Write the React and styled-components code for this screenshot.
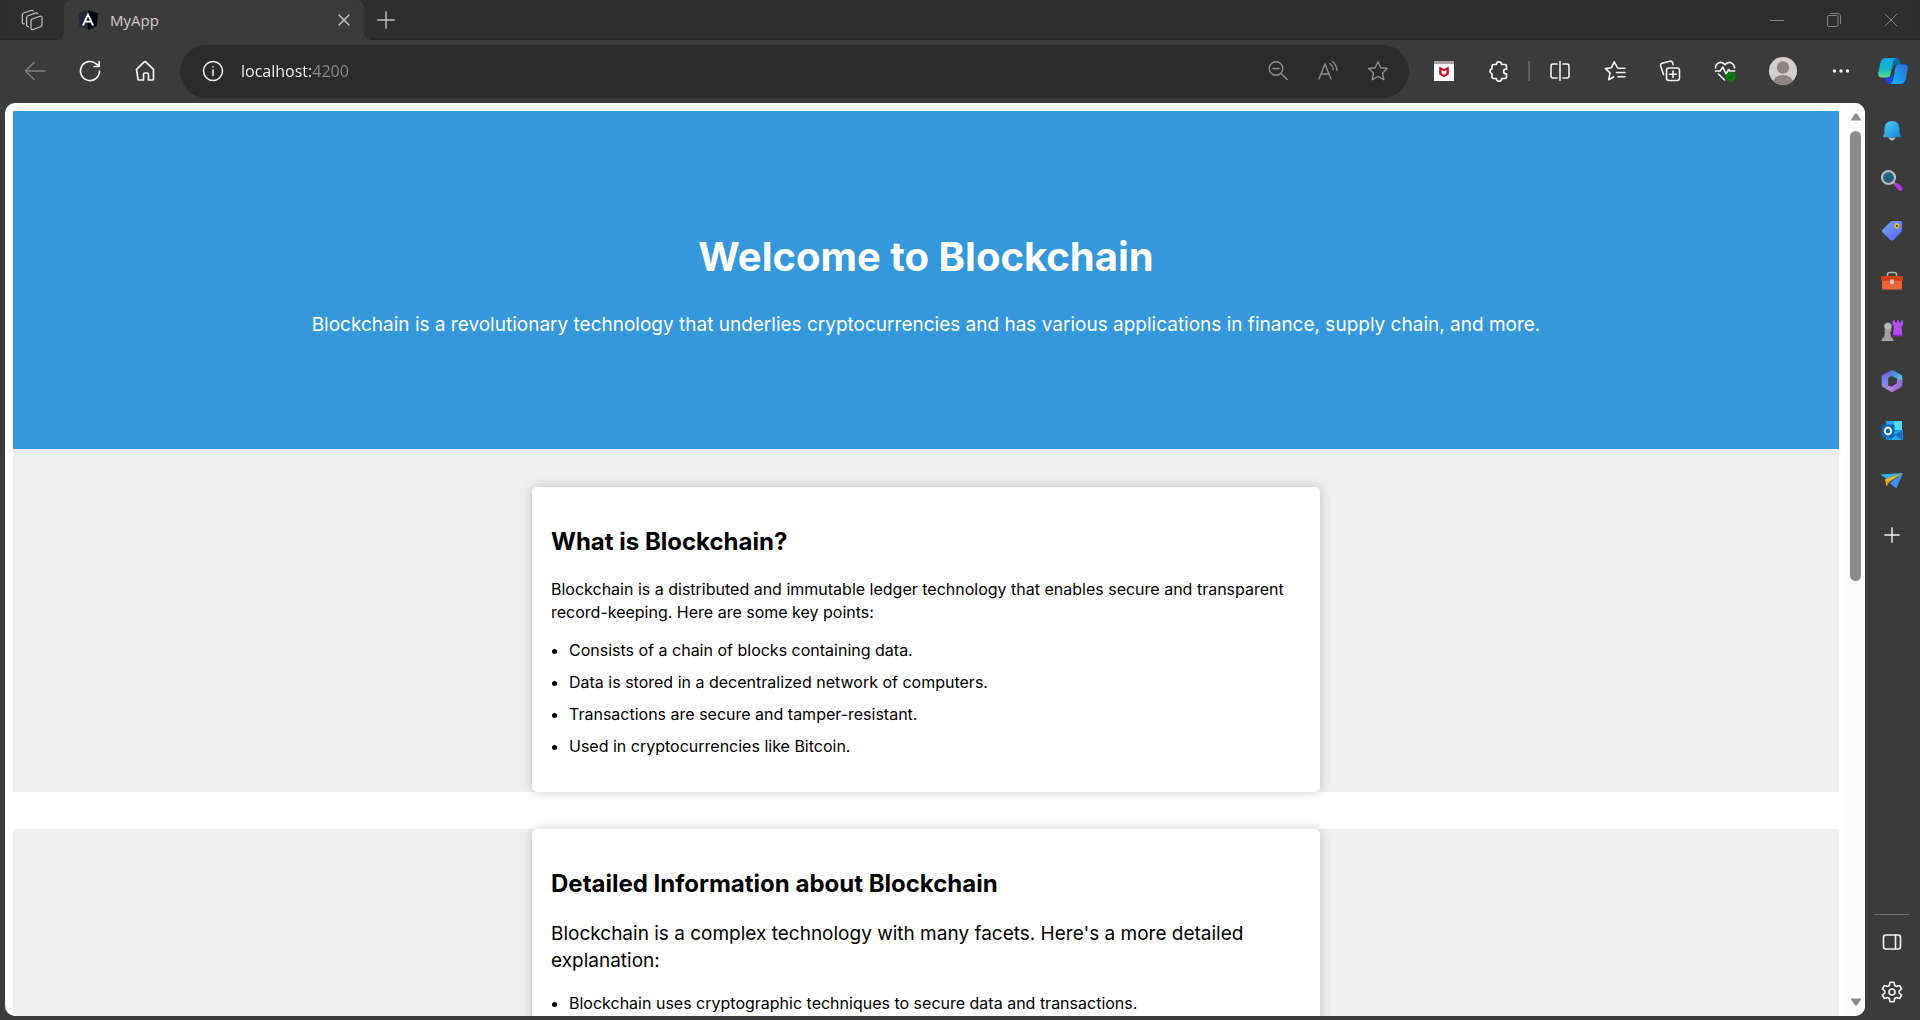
import React from "react";
import styled, { createGlobalStyle } from "styled-components";

const GlobalStyle = createGlobalStyle`
  *, *::before, *::after { box-sizing: border-box; }
  body { margin: 0; background: #3b3b3b; }
  button { font: inherit; color: inherit; background: none; border: 0; padding: 0; margin: 0; cursor: pointer; }
`;

const chromeFont = `"Open Sans", "Noto Sans", sans-serif`;
const pageFont = `Inter, "Open Sans", sans-serif`;

const Browser = styled.div`
  display: flex;
  flex-direction: column;
  height: 100vh;
  overflow: hidden;
  background: #3b3b3b;
  color: #f2f2f2;
  font-family: ${chromeFont};
`;

const TabStrip = styled.header`
  display: flex;
  flex: none;
  height: 40px;
  background: #2e2e2e;
  box-shadow: inset 0 -1px 1px #262626;
`;

const StripButton = styled.button`
  display: flex;
  align-items: center;
  justify-content: center;
  width: ${(p) => p.$width}px;
  color: ${(p) => p.$tone || "#c4c4c4"};
`;

const Tab = styled.div`
  position: relative;
  display: flex;
  align-items: center;
  gap: 12px;
  width: 300px;
  padding: 0 14px;
  border-radius: 8px 8px 0 0;
  background: #3b3b3b;

  &::before, &::after {
    content: "";
    position: absolute;
    bottom: 0;
    width: 6px;
    height: 6px;
  }
  &::before { right: 100%; background: radial-gradient(circle at 0 0, #2e2e2e 5px, #3b3b3b 6px); }
  &::after { left: 100%; background: radial-gradient(circle at 100% 0, #2e2e2e 5px, #3b3b3b 6px); }
`;

const TabTitle = styled.span`
  flex: 1;
  font-size: 15px;
  line-height: 20px;
  color: #cfcfcf;
`;

const WindowControls = styled.div`
  display: flex;
  margin-left: auto;
  padding-right: 1px;
`;

const Toolbar = styled.nav`
  display: flex;
  flex: none;
  align-items: center;
  height: 63px;
  padding: 0 2px 1px 7px;
`;

const ToolButton = styled.button`
  display: flex;
  align-items: center;
  justify-content: center;
  flex: none;
  width: ${(p) => p.$width || 55}px;
  height: 40px;
  color: ${(p) => p.$tone || "#f2f2f2"};
`;

const AddressBar = styled.form`
  display: flex;
  flex: 1;
  align-items: center;
  height: 53px;
  margin: 0 7px 0 8px;
  padding: 0 6px 0 5px;
  border-radius: 27px;
  background: #2b2b2b;
`;

const AddressInput = styled.input`
  flex: 1;
  min-width: 0;
  height: 30px;
  padding: 0 1px;
  border: 0;
  outline: 0;
  font-family: ${chromeFont};
  font-size: 16px;
  line-height: 30px;
  color: transparent;
  background: linear-gradient(90deg, #ffffff 71px, #8c8c8c 71px);
  background-clip: text;
  -webkit-background-clip: text;
`;

const Divider = styled.span`
  flex: none;
  width: 2px;
  height: 20px;
  margin: 0 2px;
  background: #5e5e5e;
`;

const AccountGroup = styled.div`
  display: flex;
  gap: 3px;
  margin-left: 3px;
`;

const Body = styled.div`
  display: flex;
  flex: 1;
  min-height: 0;
`;

const Frame = styled.div`
  display: flex;
  flex: 1;
  min-width: 0;
  margin: 0 0 4px 5px;
  border-radius: 10px;
  overflow: hidden;
  background: #ffffff;
`;

const Viewport = styled.main`
  flex: 1;
  min-width: 0;
  padding: 8px 7px 0 8px;
  overflow-y: auto;
  scrollbar-width: none;
  color: #000000;
  font-family: ${pageFont};
`;

const ScrollTrack = styled.div`
  display: flex;
  flex-direction: column;
  align-items: center;
  flex: none;
  width: 19px;
  background: #fcfcfc;
`;

const ScrollArrow = styled.button`
  display: flex;
  align-items: center;
  justify-content: center;
  width: 100%;
  height: 28px;
`;

const ScrollRail = styled.div`
  flex: 1;
`;

const ScrollThumb = styled.div`
  width: 11px;
  height: calc(100% * 21 / 40);
  border-radius: 6px;
  background: #8b8b8b;
`;

const Hero = styled.section`
  padding: 117px 20px 109px;
  background: #3498db;
  color: #ffffff;
  text-align: center;
`;

const HeroTitle = styled.h1`
  margin: 0 0 24px;
  font-size: 40px;
  line-height: 58px;
  font-weight: 700;
`;

const HeroText = styled.p`
  margin: 0;
  font-size: 19px;
  line-height: 30px;
`;

const Section = styled.section`
  padding-top: ${(p) => (p.$first ? 38 : 0)}px;
  margin-bottom: 37px;
  background: #efefef;
`;

const Card = styled.article`
  max-width: 788px;
  margin: 0 auto;
  padding: 37px 19px 19px;
  border-radius: 5px;
  background: #ffffff;
  box-shadow: 0 0 12px rgba(0, 0, 0, 0.2);
`;

const CardTitle = styled.h2`
  margin: 0 0 18px;
  font-size: 24px;
  line-height: 36px;
  font-weight: 700;
`;

const CardText = styled.p`
  margin: 0 0 ${(p) => (p.$large ? 18 : 15)}px;
  font-size: ${(p) => (p.$large ? 19 : 16)}px;
  line-height: ${(p) => (p.$large ? 27 : 23)}px;
`;

const PointList = styled.ul`
  display: flex;
  flex-direction: column;
  gap: 9px;
  margin: 0 0 15px;
  padding-left: 18px;
  font-size: 16px;
  line-height: 23px;
`;

const Sidebar = styled.aside`
  display: flex;
  flex-direction: column;
  align-items: center;
  flex: none;
  width: 55px;
  padding: 3px 2px 3px 0;
`;

const SideButton = styled.button`
  display: flex;
  align-items: center;
  justify-content: center;
  flex: none;
  width: 50px;
  height: ${(p) => p.$height || 50}px;
  color: #f2f2f2;
`;

const SideRule = styled.hr`
  width: 35px;
  height: 1px;
  margin: auto 0 2px;
  border: 0;
  background: #747474;
`;

function Line({ w = 22, h = w, sw = 1.4, children }) {
  return (
    <svg width={w} height={h} viewBox={`0 0 ${w} ${h}`} fill="none" stroke="currentColor"
      strokeWidth={sw} strokeLinecap="round" strokeLinejoin="round" aria-hidden="true">
      {children}
    </svg>
  );
}

function Art({ w = 24, h = w, children }) {
  return <svg width={w} height={h} viewBox={`0 0 ${w} ${h}`} aria-hidden="true">{children}</svg>;
}

const WorkspacesIcon = () => (
  <Line sw={1.2}>
    <path d="M10.7 10.2 18.8 7.3q2.2-.6 2.2 1.4v6.8q0 1.6-1.5 2.2l-7.3 2.8q-2.2.6-2.2-1.5v-7.2q0-1.1.7-1.6Z" />
    <path d="M7.6 17.6q-2 .3-2-1.6V8.7q0-1.5 1.4-2l7.4-2.6q1.6-.5 2.2.5" />
    <path d="M3.3 14.8q-2 .3-2-1.6V6q0-1.5 1.4-2l7.2-2.5q1.7-.5 2.3.5" />
  </Line>
);
const AngularIcon = () => (
  <Art w={20}>
    <path d="M10 0 20 3.4 18.5 16 10 20 1.5 16 0 3.4Z" fill="#23283a" />
    <path d="M10 0 20 3.4 18.5 16 10 20Z" fill="#02040f" />
    <path d="M10 2.5 3.8 15.5h2.4l1.2-3h5.2l1.2 3h2.4ZM10 6.5l1.8 4.2H8.2Z" fill="#fff" fillRule="evenodd" />
  </Art>
);
const CloseIcon = ({ size = 12, sw = 1.5 }) => (
  <Line w={size} sw={sw}><path d={`M1 1 ${size - 1} ${size - 1}M${size - 1} 1 1 ${size - 1}`} /></Line>
);
const PlusIcon = ({ size = 18 }) => (
  <Line w={size}><path d={`M${size / 2} .8V${size - 0.8}M.8 ${size / 2}H${size - 0.8}`} /></Line>
);
const BackIcon = () => <Line><path d="M21 11H1.5M10 2.5 1.5 11l8.5 8.5" /></Line>;
const ReloadIcon = () => (
  <Line sw={1.7}><path d="M20.500 11a9.500 9.500 0 1 1-3.200-7.100L20 6.300M20.200 1.500v5h-5" /></Line>
);
const HomeIcon = () => (
  <Line sw={1.7}>
    <path d="M2.500 9.300 10 2.200q1-.9 2 0l7.500 7.100V19q0 1-1 1h-4v-5.500q0-1.500-1.500-1.500h-2q-1.500 0-1.500 1.500V20h-4.500q-1 0-1-1Z" />
  </Line>
);
const InfoIcon = () => (
  <Line sw={1.5}><circle cx="11" cy="11" r="9.5" /><path d="M11 10v5.5M11 6.700v.2" /></Line>
);
const ZoomOutIcon = () => (
  <Line><circle cx="9" cy="8.5" r="6.8" /><path d="M14 13.500l6.200 6M6 8.500h6" /></Line>
);
const ReadIcon = () => (
  <Line>
    <path d="M2 19 8 4l6 15M4.200 14h7.600M13 3.500q3 2.500 3.200 6M15.500 1.500q4 3.500 4.500 9" />
  </Line>
);
const StarIcon = () => (
  <Line>
    <path d="m11 1.700 2.800 6 6.600.8-4.900 4.500 1.300 6.700L11 16.500l-5.800 3.200 1.300-6.700L1.600 8.500l6.600-.8Z" />
  </Line>
);
const ShieldIcon = () => (
  <Art w={20}>
    <rect width="20" height="20" fill="#fff" />
    <rect width="20" height="3" fill="#a79fa3" />
    <path d="M5.200 5.500 10 8l4.800-2.500v8L10 16.200l-4.800-2.700ZM7.600 9v3.300L10 13.700l2.400-1.400V9L10 10.300Z" fill="#c8131d" fillRule="evenodd" />
  </Art>
);
const PuzzleIcon = () => (
  <Line sw={1.7}>
    <path d="M5.500 4.500h2.800a2.700 2.700 0 0 1 5.400 0H17q1.500 0 1.500 1.500v3.200h-.6a2.300 2.300 0 0 0 0 4.600h.6V17q0 1.500-1.500 1.500h-3.300a2.700 2.700 0 0 1-5.400 0H5.500Q4 18.500 4 17v-3.200a2.700 2.700 0 0 1 0-5.200V6q0-1.500 1.500-1.500" />
  </Line>
);
const SplitIcon = () => (
  <Line sw={1.6}>
    <path d="M11 1.500v19M8 4H4Q2 4 2 6v10q0 2 2 2h4M14 4h4q2 0 2 2v10q0 2-2 2h-4" />
  </Line>
);
const FavoritesIcon = () => (
  <Line sw={1.6}>
    <path d="M13.300 7.500 10.300 1.800 7.500 7.700l-6 .9 4.500 4.300-1.200 6.800 4.700-2.700M14 8.200h7M12.500 12.500H21M14 16.800h7" />
  </Line>
);
const CollectionsIcon = () => (
  <Line sw={1.6}>
    <rect x="7.5" y="8" width="13" height="12.5" rx="2.5" />
    <path d="M14 11v6.500M10.700 14.200h6.600M4.500 14.500 1.700 6q-.5-2 1.300-2.700L10.800 1.200q2-.5 2.700 1.300l.6 2" />
  </Line>
);
const HealthIcon = () => (
  <Line sw={1.6}>
    <path d="M1.500 8Q1.200 5.500 3.300 3.800q4-3.200 7.700.8 3.700-4 7.700-.8 2.100 1.700 1.800 4.200M1.500 11h4.700L8.800 7l3.200 7 2.700-4.500 1 1.500h5M4.500 14l6 6" />
    <circle cx="16.5" cy="17" r="5" fill="#107c10" stroke="none" />
    <path d="m14.500 17 1.500 1.500 3-3" stroke="#0a3d0a" strokeWidth="1" />
  </Line>
);
const AvatarIcon = () => (
  <Art w={28}>
    <clipPath id="avatarClip"><circle cx="14" cy="14" r="14" /></clipPath>
    <g clipPath="url(#avatarClip)">
      <rect width="28" height="28" fill="#d2d0ce" />
      <circle cx="14" cy="10.5" r="6.2" fill="#8a8583" />
      <ellipse cx="14" cy="25.5" rx="10" ry="7.5" fill="#8a8583" />
    </g>
  </Art>
);
const MoreIcon = () => (
  <Art w={18} h={4}>
    <circle cx="2.5" cy="2" r="1.7" fill="#fff" /><circle cx="9" cy="2" r="1.7" fill="#fff" /><circle cx="15.5" cy="2" r="1.7" fill="#fff" />
  </Art>
);
const CopilotIcon = () => (
  <Art w={30} h={28}>
    <defs>
      <linearGradient id="copA" x1="0" y1="0" x2="0" y2="1"><stop offset="0" stopColor="#12a5e8" /><stop offset=".6" stopColor="#15b8c8" /><stop offset="1" stopColor="#63e08b" /></linearGradient>
      <linearGradient id="copB" x1="1" y1="0" x2="0" y2="1"><stop offset="0" stopColor="#2a6fdf" /><stop offset="1" stopColor="#14b4f7" /></linearGradient>
    </defs>
    <path d="M14 1h4.500q2.500 0 3.300 2.500L23 8h-6l-3 5Z" fill="#0d6a9c" />
    <path d="M6.500 20h6l2-4 1 11h-4q-3 0-4-3Z" fill="#1d42d8" />
    <path d="M8 1h10q-2.500 1-3.200 4.500l-2 11Q12 20.500 8.500 20.500H4Q-.5 20.500.2 15.500L2.500 5.500Q3.500 1 8 1Z" fill="url(#copA)" />
    <path d="M20.500 7.500H26q4.500 0 3.800 5l-2.300 10Q26.500 27 22 27h-9.500q2-1 2.700-4.500l2-11Q18 7.500 20.500 7.500Z" fill="url(#copB)" />
  </Art>
);

const BellIcon = () => (
  <Art>
    <defs><linearGradient id="bell" x1="0" y1="0" x2="1" y2="1"><stop offset="0" stopColor="#4fd0f5" /><stop offset="1" stopColor="#1583dc" /></linearGradient></defs>
    <path d="M8.500 18.500h7q-1 3-3.500 3t-3.500-3Z" fill="#b9b9b9" />
    <path d="M12 2q7.200.3 7.500 7.500v4.500l1.500 3q.3 1.200-1 1.200H4q-1.300 0-1-1.200l1.500-3V9.500Q4.800 2.300 12 2Z" fill="url(#bell)" />
  </Art>
);
const SearchIcon = () => (
  <Art>
    <path d="m13 13 3 2.800" stroke="#9a9a9a" strokeWidth="2" />
    <path d="m16.500 16 4 3.800" stroke="#b63bf0" strokeWidth="4" strokeLinecap="round" />
    <circle cx="8.5" cy="8.5" r="6.5" fill="#215f86" stroke="#bdbdbd" strokeWidth="2.2" />
    <path d="M5 8q1-3 4-3.500" stroke="#3a86b0" fill="none" />
  </Art>
);
const TagIcon = () => (
  <Art>
    <defs><linearGradient id="tag" x1="0" y1="0" x2="1" y2="1"><stop offset="0" stopColor="#7ca5ff" /><stop offset="1" stopColor="#5464f5" /></linearGradient></defs>
    <path d="M13 2h7.500Q22 2 22 3.500V11q0 1-.8 2l-7.700 8q-1.500 1.500-3 0l-8-7.500q-1.300-1.300 0-2.700l8-8Q11.500 2 13 2Z" fill="url(#tag)" />
    <circle cx="17" cy="7" r="1.9" fill="#3a3a50" stroke="#e9c522" strokeWidth="1.5" />
  </Art>
);
const ToolboxIcon = () => (
  <Art>
    <path d="M7.500 7V5.500Q7.500 3.500 9.500 3.500h5q2 0 2 2V7" stroke="#b5b5b5" strokeWidth="1.5" fill="none" />
    <rect x="2" y="10" width="20" height="10.5" rx="1.5" fill="#ed6238" />
    <path d="M2.500 7h19q1.500 0 1.500 1.500V12H1V8.500Q1 7 2.500 7Z" fill="#cf4218" />
    <path d="M10 10.500h4v3.500q-2 2.500-4 0Z" fill="#c9c9c9" />
  </Art>
);
const GamesIcon = () => (
  <Art>
    <path d="M12.500 1.500h2.500v2h2v-2h2v2h2v-2h2V6l-1.500 1.500.8 8.500H13l.8-8.500L12.500 6Z" fill="#b44cf0" />
    <path d="M13 15.500h9.500v2H13Z" fill="#8a2bd0" />
    <circle cx="8" cy="7.5" r="3.7" fill="#b8b8b8" />
    <path d="M4.500 10.500h7v2h-1.500l1 5.500q2.500 1 2.500 4h-12q0-3 2.500-4l1-5.500H4.500Z" fill="#a0a0a0" />
  </Art>
);
const OfficeIcon = () => (
  <Art>
    <defs>
      <linearGradient id="ofL" x1="0" y1="0" x2="0" y2="1"><stop offset="0" stopColor="#5b6fd8" /><stop offset="1" stopColor="#8f8bf0" /></linearGradient>
      <linearGradient id="ofT" x1="0" y1="0" x2="1" y2="1"><stop offset="0" stopColor="#2f7fd0" /><stop offset="1" stopColor="#62ccf5" /></linearGradient>
      <linearGradient id="ofB" x1="0" y1="0" x2="1" y2="0"><stop offset="0" stopColor="#c58ae0" /><stop offset="1" stopColor="#8f66d0" /></linearGradient>
    </defs>
    <path d="M10.500 1.500q1.500-.8 3 0L21 5.800q1.300.8 1.300 2.200v6L17 10.500V9.500L10 6.500Z" fill="url(#ofT)" />
    <path d="M22.300 11v5q0 1.400-1.300 2.200l-7.500 4.300q-1.500.8-3 0L5 19.300l4-2.500 3 .8 5-3.600v-4Z" fill="url(#ofB)" />
    <path d="M11.500 1.200 3 5.800Q1.700 6.600 1.700 8v8q0 1.400 1.300 2.200 2 1.300 4 0 1.200-.8 1.200-2.200V9l4.800-3Z" fill="url(#ofL)" />
  </Art>
);
const OutlookIcon = () => (
  <Art>
    <rect x="6" y="2" width="16" height="19" rx="1.2" fill="#1490df" />
    <path d="M14 2h8v9h-8Z" fill="#50d9ff" />
    <path d="M6 3q0-1 1-1h7v6H6Z" fill="#28a8ea" />
    <path d="m12 14 11-3.500V20q0 1-1 1H12Z" fill="#28a8ea" />
    <path d="m22.500 11-8 5 8 5Z" fill="#0f6fc0" />
    <rect x="1.5" y="5.5" width="13" height="13" rx="1.3" fill="#0864b8" />
    <ellipse cx="8" cy="12" rx="3.2" ry="3.5" fill="none" stroke="#fff" strokeWidth="1.9" />
  </Art>
);
const DropIcon = () => (
  <Art>
    <path d="M.5 5.500 23 4 8 11Z" fill="#37b1f0" />
    <path d="M23 4 16.500 19.500 9.500 14Z" fill="#3d8ff5" />
    <path d="M23 4 5 10.500 6.500 17.500 9 13Z" fill="#f7b31c" />
    <path d="M9 13 6.500 17.500l1-6Z" fill="#d88a08" />
  </Art>
);
const PanelIcon = () => (
  <Line w={20} h={18} sw={1.6}><rect x="1.5" y="2" width="17" height="14" rx="2.5" /><path d="M13.500 2v14" /></Line>
);
const GearIcon = () => (
  <Line sw={1.6}>
    <path d="M9 1.300h4l.7 3.200 1.700 1 3.200-1 2 3.300-2.500 2.200v2l2.500 2.200-2 3.300-3.200-1-1.700 1-.7 3.200H9l-.7-3.200-1.700-1-3.200 1-2-3.300L3.900 12v-2L1.400 7.800l2-3.300 3.200 1 1.700-1Z" />
    <circle cx="11" cy="11" r="3" />
  </Line>
);
const Triangle = ({ down }) => (
  <Art w={12} h={8}><path d={down ? "M.5.5h11L7 7.200q-1 1-2 0Z" : "M.5 7.500h11L7 .8Q6-.2 5 .8Z"} fill="#8b8b8b" /></Art>
);

const sideApps = [
  ["Notifications", BellIcon],
  ["Search", SearchIcon],
  ["Shopping", TagIcon],
  ["Tools", ToolboxIcon],
  ["Games", GamesIcon],
  ["Microsoft 365", OfficeIcon],
  ["Outlook", OutlookIcon],
  ["Drop", DropIcon],
];

const introPoints = [
  "Consists of a chain of blocks containing data.",
  "Data is stored in a decentralized network of computers.",
  "Transactions are secure and tamper-resistant.",
  "Used in cryptocurrencies like Bitcoin.",
];

const detailPoints = ["Blockchain uses cryptographic techniques to secure data and transactions."];

function InfoCard({ title, text, points, large }) {
  return (
    <Card>
      <CardTitle>{title}</CardTitle>
      <CardText $large={large}>{text}</CardText>
      <PointList>{points.map((point) => <li key={point}>{point}</li>)}</PointList>
    </Card>
  );
}

export default function App() {
  return (
    <Browser>
      <GlobalStyle />
      <TabStrip>
        <StripButton $width={64} aria-label="Workspaces"><WorkspacesIcon /></StripButton>
        <Tab>
          <AngularIcon />
          <TabTitle>MyApp</TabTitle>
          <StripButton $width={12} aria-label="Close tab"><CloseIcon /></StripButton>
        </Tab>
        <StripButton $width={43} aria-label="New tab"><PlusIcon /></StripButton>
        <WindowControls>
          <StripButton $width={57} $tone="#858585" aria-label="Minimize"><Line w={14} sw={1}><path d="M.5 7.500h13" /></Line></StripButton>
          <StripButton $width={57} $tone="#858585" aria-label="Restore">
            <Line w={14} sw={1}><rect x=".5" y="2.5" width="10.5" height="11" rx="1.5" /><path d="M3.500.5H11q2.500 0 2.500 2.500v7.500" /></Line>
          </StripButton>
          <StripButton $width={57} $tone="#858585" aria-label="Close window"><CloseIcon size={14} sw={1} /></StripButton>
        </WindowControls>
      </TabStrip>

      <Toolbar>
        <ToolButton $tone="#818181" aria-label="Back"><BackIcon /></ToolButton>
        <ToolButton aria-label="Refresh"><ReloadIcon /></ToolButton>
        <ToolButton aria-label="Home"><HomeIcon /></ToolButton>
        <AddressBar onSubmit={(e) => e.preventDefault()}>
          <ToolButton type="button" aria-label="Site information"><InfoIcon /></ToolButton>
          <AddressInput type="text" aria-label="Address" defaultValue="localhost:4200" spellCheck={false} />
          <ToolButton type="button" $width={50} $tone="#8f8f8f" aria-label="Zoom out"><ZoomOutIcon /></ToolButton>
          <ToolButton type="button" $width={50} $tone="#8f8f8f" aria-label="Read aloud"><ReadIcon /></ToolButton>
          <ToolButton type="button" $width={50} $tone="#8f8f8f" aria-label="Add to favorites"><StarIcon /></ToolButton>
        </AddressBar>
        <ToolButton aria-label="McAfee WebAdvisor"><ShieldIcon /></ToolButton>
        <ToolButton aria-label="Extensions"><PuzzleIcon /></ToolButton>
        <Divider />
        <ToolButton aria-label="Split screen"><SplitIcon /></ToolButton>
        <ToolButton aria-label="Favorites"><FavoritesIcon /></ToolButton>
        <ToolButton aria-label="Collections"><CollectionsIcon /></ToolButton>
        <ToolButton aria-label="Browser essentials"><HealthIcon /></ToolButton>
        <AccountGroup>
          <ToolButton aria-label="Profile"><AvatarIcon /></ToolButton>
          <ToolButton aria-label="Settings and more"><MoreIcon /></ToolButton>
        </AccountGroup>
        <ToolButton $width={50} aria-label="Copilot"><CopilotIcon /></ToolButton>
      </Toolbar>

      <Body>
        <Frame>
          <Viewport>
            <Hero>
              <HeroTitle>Welcome to Blockchain</HeroTitle>
              <HeroText>
                Blockchain is a revolutionary technology that underlies cryptocurrencies and has various applications in finance, supply chain, and more.
              </HeroText>
            </Hero>
            <Section $first>
              <InfoCard
                title="What is Blockchain?"
                text="Blockchain is a distributed and immutable ledger technology that enables secure and transparent record-keeping. Here are some key points:"
                points={introPoints}
              />
            </Section>
            <Section>
              <InfoCard
                large
                title="Detailed Information about Blockchain"
                text="Blockchain is a complex technology with many facets. Here's a more detailed explanation:"
                points={detailPoints}
              />
            </Section>
          </Viewport>
          <ScrollTrack>
            <ScrollArrow aria-label="Scroll up"><Triangle /></ScrollArrow>
            <ScrollRail><ScrollThumb /></ScrollRail>
            <ScrollArrow aria-label="Scroll down"><Triangle down /></ScrollArrow>
          </ScrollTrack>
        </Frame>
        <Sidebar>
          {sideApps.map(([name, Icon]) => (
            <SideButton key={name} aria-label={name}><Icon /></SideButton>
          ))}
          <SideButton $height={58} aria-label="Customize sidebar"><PlusIcon size={16} /></SideButton>
          <SideRule />
          <SideButton aria-label="Hide sidebar"><PanelIcon /></SideButton>
          <SideButton aria-label="Sidebar settings"><GearIcon /></SideButton>
        </Sidebar>
      </Body>
    </Browser>
  );
}
